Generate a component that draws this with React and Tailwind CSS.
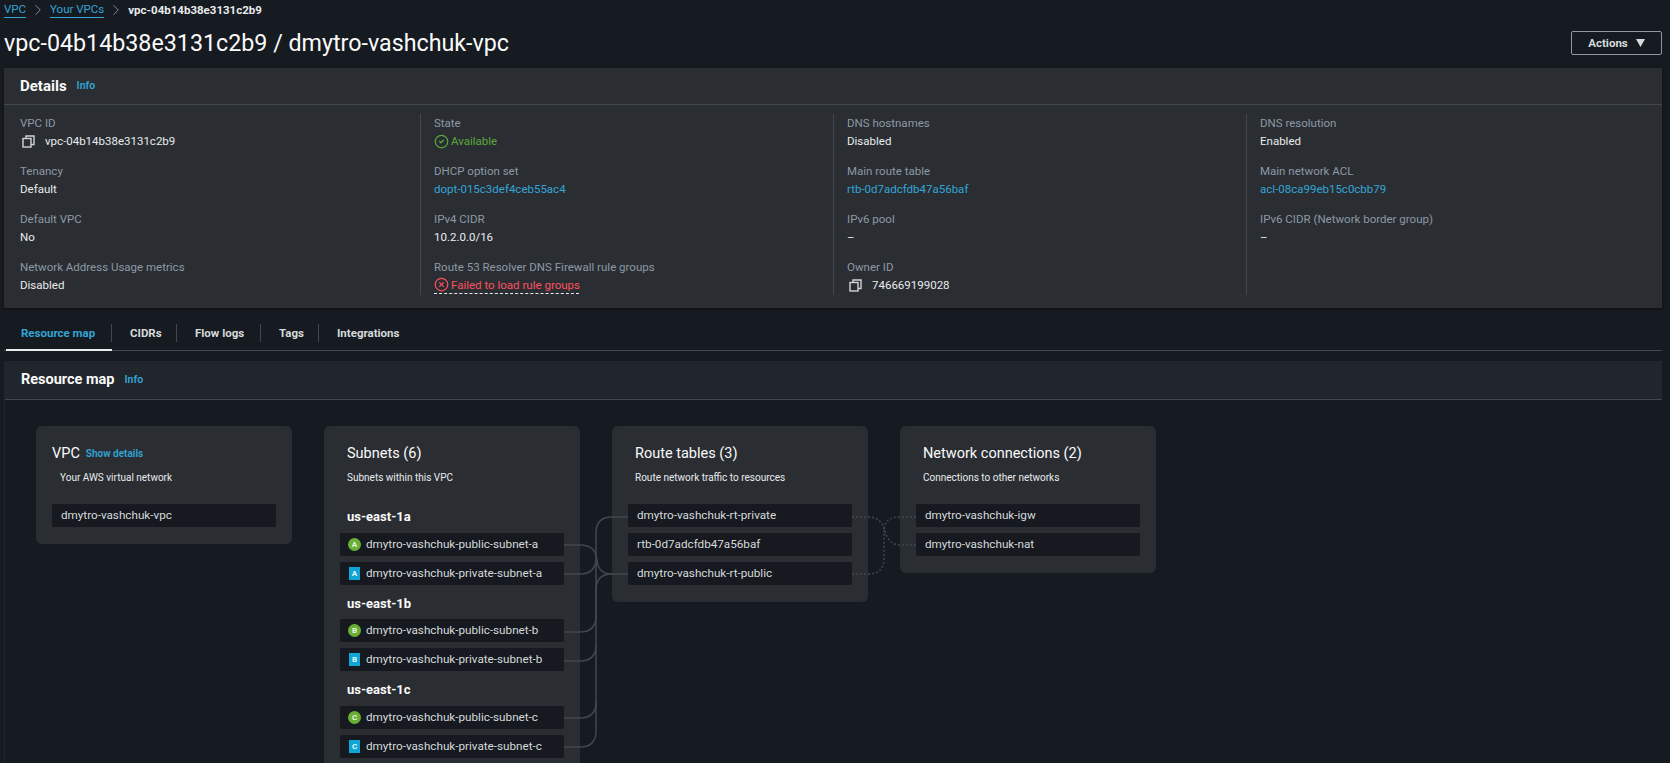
import React from 'react';
import { ChevronRight, CircleCheck, CircleX } from 'lucide-react';

const details = [
  [
    { label: 'VPC ID', value: 'vpc-04b14b38e3131c2b9', copy: true },
    { label: 'Tenancy', value: 'Default' },
    { label: 'Default VPC', value: 'No' },
    { label: 'Network Address Usage metrics', value: 'Disabled' },
  ],
  [
    { label: 'State', value: 'Available', status: 'ok' },
    { label: 'DHCP option set', value: 'dopt-015c3def4ceb55ac4', link: true },
    { label: 'IPv4 CIDR', value: '10.2.0.0/16' },
    { label: 'Route 53 Resolver DNS Firewall rule groups', value: 'Failed to load rule groups', status: 'error' },
  ],
  [
    { label: 'DNS hostnames', value: 'Disabled' },
    { label: 'Main route table', value: 'rtb-0d7adcfdb47a56baf', link: true },
    { label: 'IPv6 pool', value: '–' },
    { label: 'Owner ID', value: '746669199028', copy: true },
  ],
  [
    { label: 'DNS resolution', value: 'Enabled' },
    { label: 'Main network ACL', value: 'acl-08ca99eb15c0cbb79', link: true },
    { label: 'IPv6 CIDR (Network border group)', value: '–' },
  ],
];

const zones = [
  { name: 'us-east-1a', letter: 'A', head: 'mt-[21px] mb-[7px]', suffix: 'a' },
  { name: 'us-east-1b', letter: 'B', head: 'mt-[10px] mb-[6px]', suffix: 'b' },
  { name: 'us-east-1c', letter: 'C', head: 'mt-[10px] mb-[7px]', suffix: 'c' },
];

function CopyIcon() {
  return (
    <svg width="13" height="13" viewBox="0 0 13 13" fill="none" stroke="#d1d5db" strokeWidth="1.4" className="shrink-0">
      <rect x="1" y="3.5" width="8" height="8.5" />
      <path d="M4 3.5V1h8v8.5H9" />
    </svg>
  );
}

function DetailValue({ item }) {
  if (item.copy) {
    return (
      <div className="flex items-center h-[18px] pl-[2px] text-[#e9ebed]">
        <CopyIcon />
        <span className="ml-[10px]">{item.value}</span>
      </div>
    );
  }
  if (item.status === 'ok') {
    return (
      <div className="flex items-center h-[18px] text-[#5aa83a]">
        <CircleCheck size={15} strokeWidth={2} className="shrink-0" />
        <span className="ml-[2px]">{item.value}</span>
      </div>
    );
  }
  if (item.status === 'error') {
    return (
      <div className="flex items-center h-[18px] w-[145px] whitespace-nowrap text-[#ff4f5e] border-b border-dashed border-[#e9ebed]">
        <CircleX size={15} strokeWidth={2} className="shrink-0" />
        <span className="ml-[2px]">{item.value}</span>
      </div>
    );
  }
  return <div className={`h-[18px] ${item.link ? 'text-[#33a5d6]' : 'text-[#e9ebed]'}`}>{item.value}</div>;
}

function MapRow({ children }) {
  return (
    <div className="flex items-center h-[23px] px-[9px] pb-[1px] rounded-[2px] bg-[#16191f] text-[11.7px] text-[#d5dbdb] whitespace-nowrap">
      {children}
    </div>
  );
}

function SubnetRow({ letter, kind, name }) {
  return (
    <div className="flex items-center h-[23px] pl-2 rounded-[2px] bg-[#16191f] text-[11.7px] text-[#d5dbdb] whitespace-nowrap">
      {kind === 'public' ? (
        <span className="flex items-center justify-center w-[13px] h-[13px] rounded-full bg-[#6aaf35] text-[8px] font-bold text-[#e9f5e0]">{letter}</span>
      ) : (
        <span className="flex items-center justify-center w-[11px] h-[13px] mx-[1px] bg-[#0fa5d4] text-[8px] font-bold text-[#e6f6fb]">{letter}</span>
      )}
      <span className="ml-[5px] pb-[1px]">{name}</span>
    </div>
  );
}

function Connectors() {
  return (
    <svg className="absolute top-0 left-0 pointer-events-none" width="1670" height="763" fill="none">
      <g stroke="#414750" strokeWidth="1.5">
        <path d="M564 545H580Q596 545 597 560Q598 574 612 574H628" />
        <path d="M564 574H580Q596 574 596 558" />
        <path d="M564 632H580Q596 632 596 616V590Q596 574 612 574" />
        <path d="M564 661H580Q596 661 596 645" />
        <path d="M564 718H580Q596 718 596 702" />
        <path d="M564 747H580Q596 747 596 731V533Q596 517 612 517H628" />
      </g>
      <g stroke="#414750" strokeWidth="1.5" strokeDasharray="2 2">
        <path d="M852 517H868Q880 517 884 528Q888 545 900 545H916" />
        <path d="M916 517H900Q884 517 884 530" />
        <path d="M852 574H868Q884 574 884 558V530" />
      </g>
    </svg>
  );
}

export default function App() {
  return (
    <div className="relative h-[763px] overflow-hidden bg-[#161a21] pl-[4px] pr-[8px] text-[11.5px] leading-[18px] font-['Roboto',sans-serif]">
      {/* Breadcrumb */}
      <div className="flex items-center h-5 text-[#33a5d6]">
        <a className="border-b border-[#33a5d6] leading-[15px]">VPC</a>
        <ChevronRight size={18} strokeWidth={1.2} className="mx-[3px] text-[#8d99a5]" />
        <a className="border-b border-[#33a5d6] leading-[15px]">Your VPCs</a>
        <ChevronRight size={18} strokeWidth={1.2} className="mx-[3px] text-[#8d99a5]" />
        <span className="font-bold text-[#e9ebed] text-[11.5px]">vpc-04b14b38e3131c2b9</span>
      </div>

      {/* Title */}
      <div className="flex items-center justify-between h-[46px] mb-[2px]">
        <h1 className="text-[23.25px] text-[#fafafa]">vpc-04b14b38e3131c2b9 / dmytro-vashchuk-vpc</h1>
        <button className="flex items-center justify-center gap-[8px] w-[91px] h-[24px] border border-[#8d99a5] rounded-[2px] text-[11.5px] font-bold text-[#d5dbdb]">
          Actions
          <svg width="9" height="8" viewBox="0 0 9 8"><path d="M0 0h9L4.5 8z" fill="#d5dbdb" /></svg>
        </button>
      </div>

      {/* Details */}
      <section className="h-[240px] bg-[#2a2e33] shadow-[0_1px_2px_#0008]">
        <div className="flex items-center h-[36px] pl-[16px] border-b border-[#414750] box-content">
          <h2 className="text-[15px] font-bold text-[#fafafa]">Details</h2>
          <span className="ml-[10px] text-[10.5px] font-semibold text-[#33a5d6]">Info</span>
        </div>
        <div className="grid grid-cols-[400px_413px_413px_1fr] pl-[16px] pt-[9px]">
          {details.map((col, i) => (
            <div key={i} className={`flex flex-col gap-[12px] h-[181px] ${i > 0 ? 'border-l border-[#414750] pl-[13px]' : ''}`}>
              {col.map((item) => (
                <div key={item.label}>
                  <div className="text-[#8d99a5] whitespace-nowrap">{item.label}</div>
                  <DetailValue item={item} />
                </div>
              ))}
            </div>
          ))}
        </div>
      </section>

      {/* Tabs */}
      <div className="flex h-[43px] border-b border-[#414750] text-[11.5px] font-bold text-[#d5dbdb]">
        <div className="w-[106px] h-[43px] ml-[2px] pt-[16px] border-b-2 border-[#e9ebed]">
          <div className="h-[18px] pl-[15px] border-r border-[#414750] text-[#33a5d6]">Resource map</div>
        </div>
        <div className="pt-[16px]"><div className="w-[65px] h-[18px] pl-[18px] border-r border-[#414750]">CIDRs</div></div>
        <div className="pt-[16px]"><div className="w-[84px] h-[18px] pl-[18px] border-r border-[#414750]">Flow logs</div></div>
        <div className="pt-[16px]"><div className="w-[58px] h-[18px] pl-[18px] border-r border-[#414750]">Tags</div></div>
        <div className="pt-[16px] pl-[18px]">Integrations</div>
      </div>

      {/* Resource map */}
      <section className="mt-[10px] border-l border-[#1f242b]">
        <div className="flex items-center h-[38px] pl-[16px] bg-[#21252c] border-b border-[#414750] box-content">
          <h2 className="text-[14.5px] font-bold text-[#fafafa]">Resource map</h2>
          <span className="ml-[10px] text-[10.5px] font-semibold text-[#33a5d6]">Info</span>
        </div>
        <div className="flex items-start gap-8 pl-[31px] pt-[26px] text-[#e9ebed]">
          {/* VPC */}
          <div className="w-64 rounded-md bg-[#2a2e33] px-4 pt-[16px] pb-[17px]">
            <div className="flex items-center h-6">
              <span className="text-[14.5px] text-[#fafafa]">VPC</span>
              <span className="ml-[6px] text-[10px] font-semibold text-[#33a5d6]">Show details</span>
            </div>
            <div className="mt-[3px] ml-2 text-[10px] text-[#e9ebed]">Your AWS virtual network</div>
            <div className="mt-[17px]"><MapRow>dmytro-vashchuk-vpc</MapRow></div>
          </div>

          {/* Subnets */}
          <div className="w-64 rounded-md bg-[#2a2e33] px-4 pt-[16px] pb-[17px]">
            <div className="pl-[7px]">
              <div className="h-6 text-[14.5px] leading-6 text-[#fafafa]">Subnets (6)</div>
              <div className="mt-[3px] text-[10px]">Subnets within this VPC</div>
            </div>
            {zones.map((z) => (
              <div key={z.name}>
                <div className={`pl-[7px] text-[13px] font-bold h-[18px] text-[#fafafa] ${z.head}`}>{z.name}</div>
                <div className="flex flex-col gap-[6px]">
                  <SubnetRow letter={z.letter} kind="public" name={`dmytro-vashchuk-public-subnet-${z.suffix}`} />
                  <SubnetRow letter={z.letter} kind="private" name={`dmytro-vashchuk-private-subnet-${z.suffix}`} />
                </div>
              </div>
            ))}
          </div>

          {/* Route tables */}
          <div className="w-64 rounded-md bg-[#2a2e33] px-4 pt-[16px] pb-[17px]">
            <div className="pl-[7px]">
              <div className="h-6 text-[14.5px] leading-6 text-[#fafafa]">Route tables (3)</div>
              <div className="mt-[3px] text-[10px]">Route network traffic to resources</div>
            </div>
            <div className="mt-[17px] flex flex-col gap-[6px]">
              <MapRow>dmytro-vashchuk-rt-private</MapRow>
              <MapRow>rtb-0d7adcfdb47a56baf</MapRow>
              <MapRow>dmytro-vashchuk-rt-public</MapRow>
            </div>
          </div>

          {/* Network connections */}
          <div className="w-64 rounded-md bg-[#2a2e33] px-4 pt-[16px] pb-[17px]">
            <div className="pl-[7px]">
              <div className="h-6 text-[14.5px] leading-6 text-[#fafafa]">Network connections (2)</div>
              <div className="mt-[3px] text-[10px]">Connections to other networks</div>
            </div>
            <div className="mt-[17px] flex flex-col gap-[6px]">
              <MapRow>dmytro-vashchuk-igw</MapRow>
              <MapRow>dmytro-vashchuk-nat</MapRow>
            </div>
          </div>
        </div>
      </section>

      <Connectors />
    </div>
  );
}
